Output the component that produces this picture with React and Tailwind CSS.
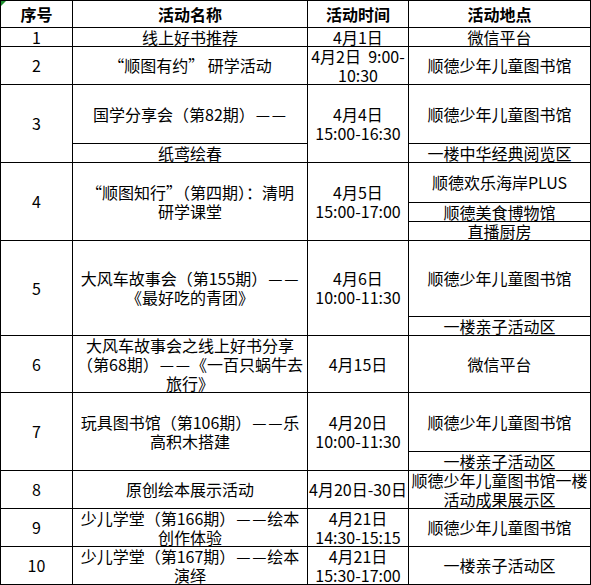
import clsx from 'clsx'

function Cell({ span, head, children }) {
  return (
    <div
      className={clsx(
        'bg-white flex items-center justify-center text-center overflow-hidden whitespace-nowrap',
        span,
        head && 'font-bold'
      )}
    >
      <div>{children}</div>
    </div>
  )
}

// two full-width dashes, spaced like the song-style font in the sheet
function Dashes() {
  return (
    <>
      <span className="inline-block w-[16px] text-center">—</span>
      <span className="inline-block w-[16px] text-center">—</span>
    </>
  )
}

export default function App() {
  return (
    <div className="relative w-[591px] text-black text-[16px] leading-[19px] font-['Noto_Sans_CJK_SC','Noto_Sans',sans-serif]">
      <div className="grid grid-cols-[71px_234px_100px_181px] grid-rows-[26px_18px_37px_58px_18px_39px_18px_18px_75px_18px_56px_58px_18px_37px_37px_37px] gap-px bg-black p-px">
        {/* header */}
        <Cell head>序号</Cell>
        <Cell head>活动名称</Cell>
        <Cell head>活动时间</Cell>
        <Cell head>活动地点</Cell>

        <Cell>1</Cell>
        <Cell>线上好书推荐</Cell>
        <Cell>4月1日</Cell>
        <Cell>微信平台</Cell>

        <Cell>2</Cell>
        <Cell>“顺图有约” 研学活动</Cell>
        <Cell>4月2日&nbsp; 9:00-<br />10:30</Cell>
        <Cell>顺德少年儿童图书馆</Cell>

        <Cell span="row-span-2">3</Cell>
        <Cell>国学分享会（第82期）<Dashes /></Cell>
        <Cell span="row-span-2">4月4日<br />15:00-16:30</Cell>
        <Cell>顺德少年儿童图书馆</Cell>
        <Cell>纸鸢绘春</Cell>
        <Cell>一楼中华经典阅览区</Cell>

        <Cell span="row-span-3">4</Cell>
        <Cell span="row-span-3">“顺图知行”（第四期）：清明<br />研学课堂</Cell>
        <Cell span="row-span-3">4月5日<br />15:00-17:00</Cell>
        <Cell>顺德欢乐海岸PLUS</Cell>
        <Cell>顺德美食博物馆</Cell>
        <Cell>直播厨房</Cell>

        <Cell span="row-span-2">5</Cell>
        <Cell span="row-span-2">大风车故事会（第155期）<Dashes /><br />《最好吃的青团》</Cell>
        <Cell span="row-span-2">4月6日<br />10:00-11:30</Cell>
        <Cell>顺德少年儿童图书馆</Cell>
        <Cell>一楼亲子活动区</Cell>

        <Cell>6</Cell>
        <Cell>大风车故事会之线上好书分享<br />（第68期）<Dashes />《一百只蜗牛去<br />旅行》</Cell>
        <Cell>4月15日</Cell>
        <Cell>微信平台</Cell>

        <Cell span="row-span-2">7</Cell>
        <Cell span="row-span-2">玩具图书馆（第106期）<Dashes />乐<br />高积木搭建</Cell>
        <Cell span="row-span-2">4月20日<br />10:00-11:30</Cell>
        <Cell>顺德少年儿童图书馆</Cell>
        <Cell>一楼亲子活动区</Cell>

        <Cell>8</Cell>
        <Cell>原创绘本展示活动</Cell>
        <Cell>4月20日-30日</Cell>
        <Cell>顺德少年儿童图书馆一楼<br />活动成果展示区</Cell>

        <Cell>9</Cell>
        <Cell>少儿学堂（第166期）<Dashes />绘本<br />创作体验</Cell>
        <Cell>4月21日<br />14:30-15:15</Cell>
        <Cell>顺德少年儿童图书馆</Cell>

        <Cell>10</Cell>
        <Cell>少儿学堂（第167期）<Dashes />绘本<br />演绎</Cell>
        <Cell>4月21日<br />15:30-17:00</Cell>
        <Cell>一楼亲子活动区</Cell>
      </div>
      {/* green corner marker */}
      <div className="absolute left-px top-px w-0 h-0 border-t-[5px] border-r-[5px] border-t-[#1f8f2f] border-r-transparent" />
    </div>
  )
}
